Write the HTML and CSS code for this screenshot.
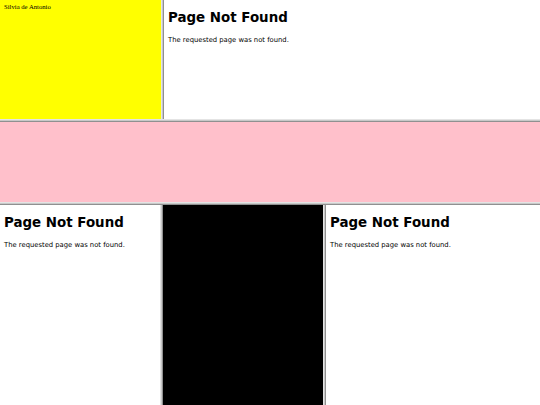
FILE: index.html
```html
<!DOCTYPE html>
<html>
<head>
<meta charset="utf-8">
<link rel="stylesheet" href="styles.css">
</head>
<body>
<div class="page">
  <div class="row row-top">
    <div class="frame yellow"><p class="author">Silvia de Antonio</p></div>
    <div class="vdiv"></div>
    <div class="frame white grow">
      <h1 class="title">Page Not Found</h1>
      <p class="msg">The requested page was not found.</p>
    </div>
  </div>
  <div class="hdiv"></div>
  <div class="row row-mid">
    <div class="frame pink grow"></div>
  </div>
  <div class="hdiv"></div>
  <div class="row row-bot">
    <div class="frame white col-left">
      <h1 class="title">Page Not Found</h1>
      <p class="msg">The requested page was not found.</p>
    </div>
    <div class="vdiv"></div>
    <div class="frame black col-mid"></div>
    <div class="vdiv"></div>
    <div class="frame white grow">
      <h1 class="title">Page Not Found</h1>
      <p class="msg">The requested page was not found.</p>
    </div>
  </div>
</div>
</body>
</html>
```

FILE: styles.css
```css
html, body {
  margin: 0;
  padding: 0;
  background: #fff;
}
.page {
  width: 540px;
  height: 405px;
  display: flex;
  flex-direction: column;
  overflow: hidden;
}
.row {
  display: flex;
}
.row-top { height: 119px; }
.row-mid { height: 80px; }
.row-bot { height: 200px; }
.frame {
  box-sizing: border-box;
  padding: 0 4px;
  overflow: hidden;
}
.grow { flex: 1; }
.yellow { background: #ffff00; width: 161px; }
.pink { background: #ffc0cb; }
.white { background: #fff; }
.black { background: #000; }
.col-left { width: 160px; }
.col-mid { width: 160px; }
.vdiv {
  width: 3px;
  background: #c8c8c8;
  border-left: 1px solid #e4e4e4;
  border-right: 1px solid #909090;
  box-sizing: border-box;
}
.hdiv {
  height: 3px;
  background: #c8c8c8;
  border-top: 1px solid #e4e4e4;
  border-bottom: 1px solid #909090;
  box-sizing: border-box;
}
.author {
  margin: 3px 0 0;
  font-family: "Liberation Serif", serif;
  font-size: 6.7px;
  line-height: 8px;
}
.title {
  margin: 10px 0 0;
  font-family: "DejaVu Sans", Verdana, sans-serif;
  font-size: 13.4px;
  font-weight: bold;
  line-height: 16px;
  color: #000;
}
.msg {
  margin: 10px 0 0;
  font-family: "DejaVu Sans", Verdana, sans-serif;
  font-size: 6.8px;
  line-height: 9px;
  color: #000;
}
```
